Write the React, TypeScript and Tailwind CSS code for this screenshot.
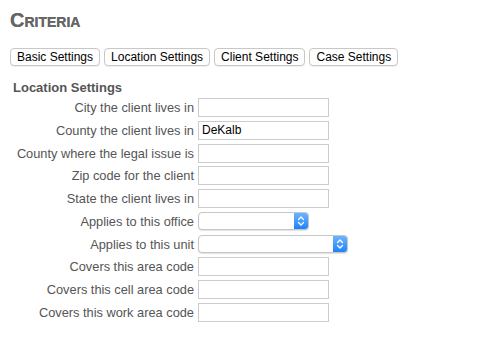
import React from 'react';

const rows: { label: string; kind: 'text' | 'office' | 'unit'; value?: string }[] = [
  { label: 'City the client lives in', kind: 'text' },
  { label: 'County the client lives in', kind: 'text', value: 'DeKalb' },
  { label: 'County where the legal issue is', kind: 'text' },
  { label: 'Zip code for the client', kind: 'text' },
  { label: 'State the client lives in', kind: 'text' },
  { label: 'Applies to this office', kind: 'office' },
  { label: 'Applies to this unit', kind: 'unit' },
  { label: 'Covers this area code', kind: 'text' },
  { label: 'Covers this cell area code', kind: 'text' },
  { label: 'Covers this work area code', kind: 'text' },
];

const tabs = ['Basic Settings', 'Location Settings', 'Client Settings', 'Case Settings'];

function SelectBox({ width }: { width: string }) {
  return (
    <div className={`flex h-[18px] ${width} rounded-[4px] border border-[#c6c6c6] bg-white shadow-[0_1px_1px_rgba(0,0,0,0.12)] overflow-hidden`}>
      <div className="flex-1" />
      <div className="w-[14px] h-full bg-gradient-to-b from-[#6cb3fa] to-[#1a82fb] flex items-center justify-center">
        <svg width="8" height="12" viewBox="0 0 8 12" fill="none" stroke="white" strokeWidth="1.3" strokeLinecap="round" strokeLinejoin="round">
          <path d="M1.5 4.5 L4 2 L6.5 4.5" />
          <path d="M1.5 7.5 L4 10 L6.5 7.5" />
        </svg>
      </div>
    </div>
  );
}

export default function App() {
  return (
    <div className="w-[482px] h-[356px] bg-white font-['Liberation_Sans',Arial,sans-serif]">
      <div className="pl-[10px] pt-[10px]">
        <h1 className="text-[#666666] font-bold text-[20px] leading-[21px] [font-variant:small-caps] [text-shadow:0_0_0.4px_#666]">
          Criteria
        </h1>

        {/* Tabs */}
        <div className="flex gap-[4px] mt-[17px]">
          {tabs.map((t) => (
            <button
              key={t}
              type="button"
              className="h-[18px] px-[6px] rounded-[4px] border border-[#c8c8c8] bg-white text-[12px] leading-[16px] text-black shadow-[0_1px_0_rgba(0,0,0,0.06)]"
            >
              {t}
            </button>
          ))}
        </div>

        {/* Location section */}
        <div className="mt-[14px] pl-[3px]">
          <h2 className="text-[#555555] font-bold text-[13px] leading-[15px]">Location Settings</h2>
          <div className="mt-[3px] flex flex-col gap-y-[3.75px]">
            {rows.map((r) => (
              <div key={r.label} className="flex items-center h-[19px]">
                <div className="w-[185px] pr-[4px] text-right text-[12.8px] text-[#555555] leading-[19px] whitespace-nowrap">
                  {r.label}
                </div>
                {r.kind === 'text' && (
                  <div className="w-[131px] h-[19px] border border-[#cccccc] bg-white px-[3px] text-[12px] leading-[17px] text-black">
                    {r.value}
                  </div>
                )}
                {r.kind === 'office' && <SelectBox width="w-[111px]" />}
                {r.kind === 'unit' && <SelectBox width="w-[150px]" />}
              </div>
            ))}
          </div>
        </div>
      </div>
    </div>
  );
}
